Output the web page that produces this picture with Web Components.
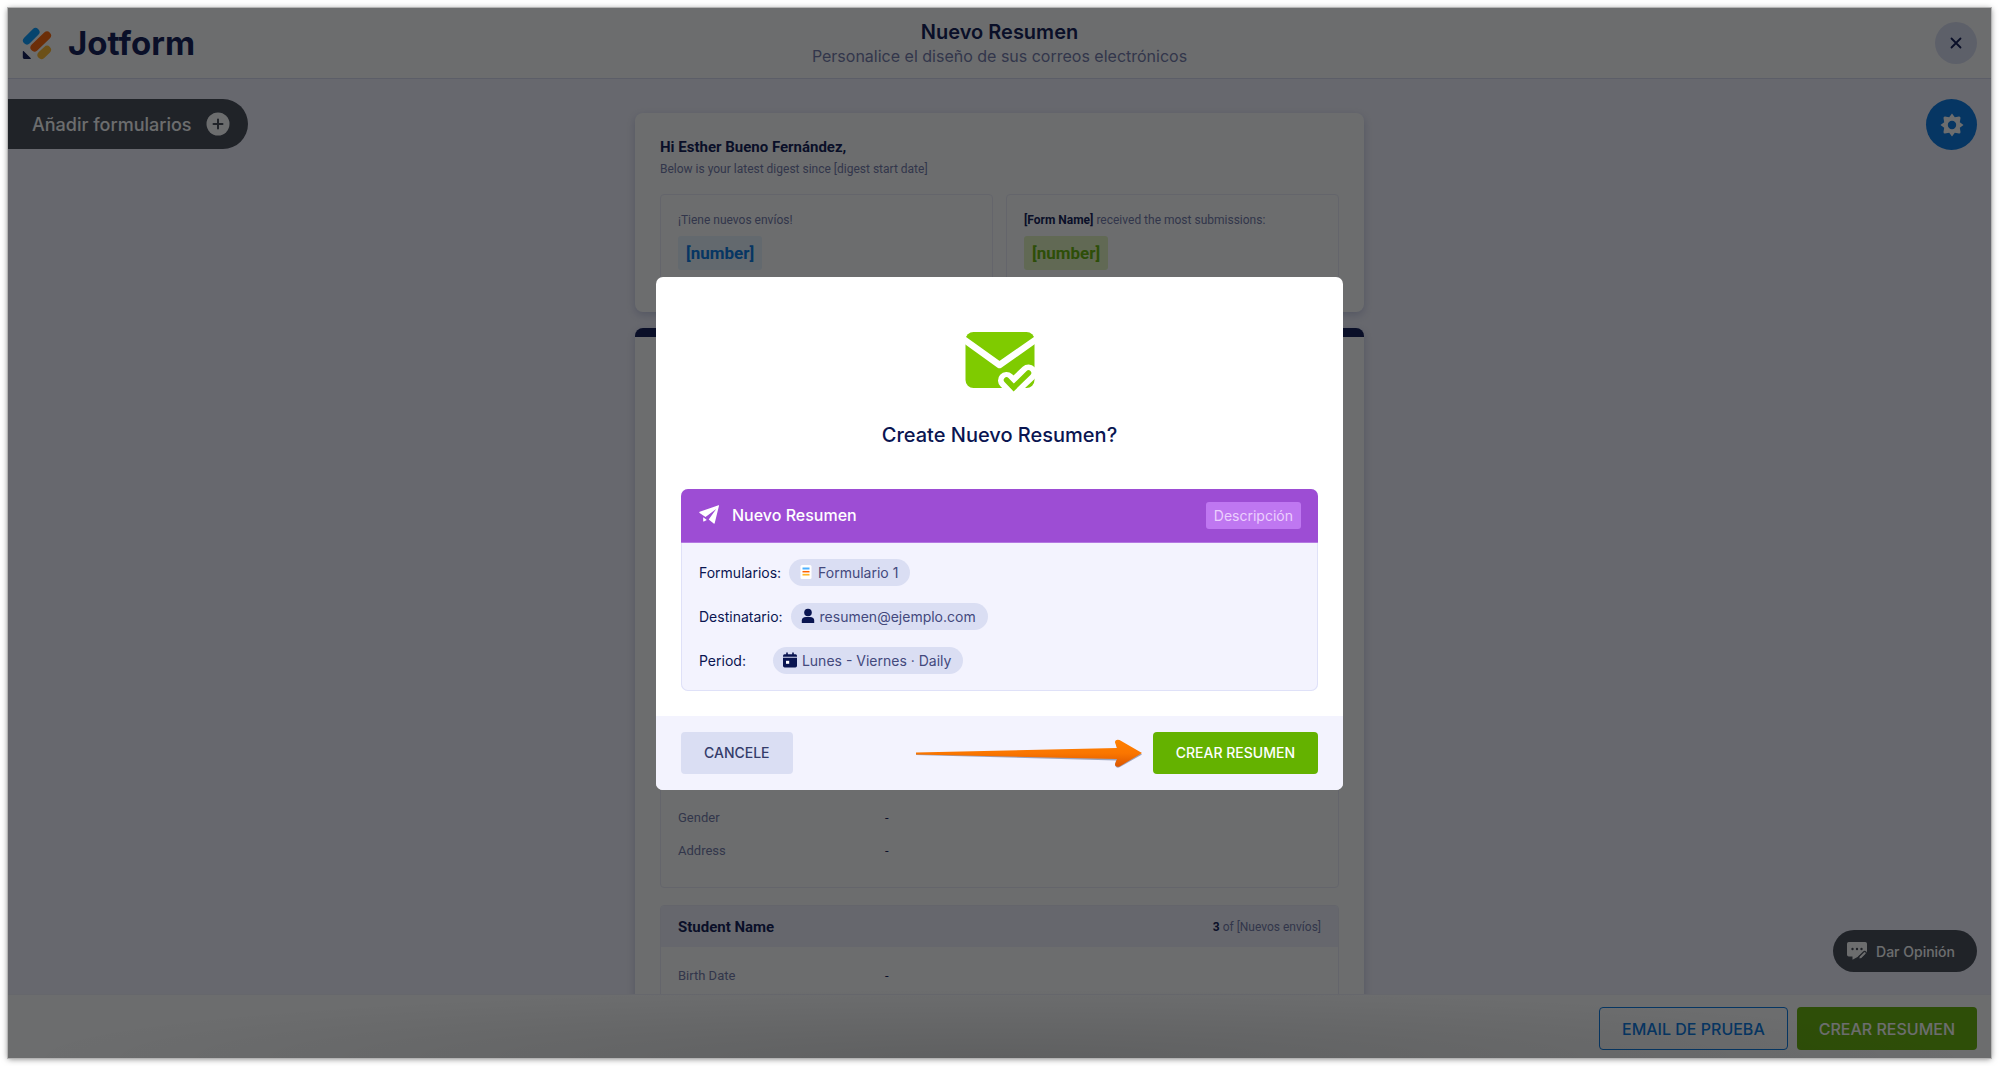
<!DOCTYPE html>
<html lang="es">
<head>
<meta charset="utf-8">
<title>Nuevo Resumen</title>
<style>
  html, body { margin: 0; background: #fff; }
  body { font-family: Inter, "Open Sans", sans-serif; color: #0a1551; }
</style>
</head>
<body>
<digest-app></digest-app>

<script>
const define = (name, markup) => {
  const template = document.createElement('template');
  template.innerHTML = '<style>*{box-sizing:border-box}button{font:inherit;cursor:pointer;border:0;margin:0}svg{display:block;flex:none}</style>' + markup;
  customElements.define(name, class extends HTMLElement {
    constructor() {
      super();
      this.attachShadow({ mode: 'open' }).append(template.content.cloneNode(true));
    }
  });
};

define('app-logo', `
  <style>
    :host { display: block; }
    a { display: flex; align-items: center; gap: 16px; color: #0a1551; text-decoration: none; font-size: 33px; font-weight: 700; line-height: 40px; }
  </style>
  <a href="#" aria-label="Jotform">
    <svg width="30" height="34" viewBox="0 0 30 34" fill="none" stroke-width="8" stroke-linecap="round">
      <path d="M5 14.5 13.5 6" stroke="#0099ff"/>
      <path d="M12.5 21.500 25 9.500" stroke="#ff6100"/>
      <path d="M19.500 29 25 23.800" stroke="#ffb629"/>
      <path d="M.8 25.800c0-.8.6-1 1.200-.4l6.600 6.500c.5.600.3 1.200-.5 1.200H2.600c-1 0-1.800-.8-1.800-1.800z" fill="#0a1551"/>
    </svg>
    <span>Jotform</span>
  </a>`);

define('app-header', `
  <style>
    :host { display: grid; grid-template-columns: 1fr auto 1fr; align-items: center; height: 71px; padding: 0 14px; background: #fff; border-bottom: 1px solid #d6daf0; }
    .title { text-align: center; }
    h1 { margin: 0; font-size: 20px; line-height: 26px; font-weight: 600; }
    p { margin: 0; font-size: 16px; line-height: 22px; color: #6f76a7; }
    button { justify-self: end; width: 42px; height: 42px; border-radius: 50%; background: #dadef3; display: grid; place-items: center; padding: 0; }
  </style>
  <app-logo></app-logo>
  <div class="title"><h1>Nuevo Resumen</h1><p>Personalice el diseño de sus correos electrónicos</p></div>
  <button type="button" aria-label="Cerrar"><svg width="12" height="12" viewBox="0 0 12 12" stroke="#0a1551" stroke-width="1.800" stroke-linecap="round"><path d="M1.500 1.500l9 9M10.500 1.500l-9 9"/></svg></button>`);

define('stat-box', `
  <style>
    :host { display: block; flex: 1; height: 94px; padding: 15px 17px; border: 1px solid #eaebf8; border-radius: 4px; }
    p { margin: 0; font-size: 12px; line-height: 20px; color: #6f76a7; }
    output { display: inline-block; margin-top: 6px; padding: 0 8px; font-size: 17px; line-height: 34px; font-weight: 700; border-radius: 3px; color: #0075e3; background: #e8f4fe; }
    :host([tone="green"]) output { color: #64b200; background: #e3f6bf; }
    ::slotted(b) { color: #0a1551; }
  </style>
  <p><slot></slot></p>
  <output>[number]</output>`);

define('digest-summary', `
  <style>
    :host { display: block; height: 199px; padding: 24px 25px; background: #fff; border-radius: 8px; box-shadow: 0 3px 8px rgba(84,95,160,.3); font-family: Roboto, sans-serif; }
    h2 { margin: 0; font-size: 15px; line-height: 20px; font-weight: 700; }
    p { margin: 2px 0 0; font-size: 12px; line-height: 20px; color: #6f76a7; }
    .stats { display: flex; gap: 13px; margin-top: 15px; }
  </style>
  <h2>Hi Esther Bueno Fernández,</h2>
  <p>Below is your latest digest since [digest start date]</p>
  <div class="stats">
    <stat-box>¡Tiene nuevos envíos!</stat-box>
    <stat-box tone="green"><b>[Form Name]</b> received the most submissions:</stat-box>
  </div>`);

define('field-row', `
  <style>
    :host { display: grid; grid-template-columns: 207px 1fr; font-size: 13px; line-height: 33px; color: #6f76a7; }
    ::slotted([slot="value"]) { color: #0a1551; }
  </style>
  <slot></slot><slot name="value"></slot>`);

define('submission-entry', `
  <style>
    :host { display: flex; flex-direction: column; border: 1px solid #eaebf8; border-radius: 4px; overflow: hidden; }
    header { display: flex; justify-content: space-between; align-items: center; height: 41px; padding: 0 17px; background: #f0f1fd; font-size: 15px; font-weight: 700; }
    .body { flex: 1; display: flex; flex-direction: column; justify-content: flex-end; padding: 12px 17px 20px; }
  </style>
  <header><slot name="name"></slot><slot name="count"></slot></header>
  <div class="body"><slot></slot></div>`);

define('digest-entries', `
  <style>
    :host { display: flex; flex-direction: column; gap: 17px; padding: 24px 25px; background: #fff; border-top: 9px solid #0a1551; border-radius: 8px 8px 0 0; box-shadow: 0 3px 8px rgba(84,95,160,.3); font-family: Roboto, sans-serif; }
    .first { min-height: 527px; }
    .count { font-size: 12px; font-weight: 400; color: #6f76a7; }
    .count b { color: #0a1551; }
  </style>
  <submission-entry class="first">
    <field-row>Gender<span slot="value">-</span></field-row>
    <field-row>Address<span slot="value">-</span></field-row>
  </submission-entry>
  <submission-entry>
    <span slot="name">Student Name</span>
    <span slot="count" class="count"><b>3</b> of [Nuevos envíos]</span>
    <field-row>Birth Date<span slot="value">-</span></field-row>
  </submission-entry>`);

define('digest-canvas', `
  <style>
    :host { flex: 1; min-height: 0; overflow: hidden; display: grid; grid-template-columns: 1fr minmax(0, 729px) 1fr; grid-template-rows: minmax(0, 1fr); background: #f3f3fe; }
    .left { padding-top: 20px; }
    .add { display: flex; align-items: center; gap: 14px; height: 50px; padding: 0 18px 0 24px; border-radius: 0 25px 25px 0; background: #414652; color: #fff; font-size: 18px; font-weight: 500; }
    .mail { display: flex; flex-direction: column; gap: 16px; padding-top: 34px; }
    .mail > * { flex: none; }
    .right { display: flex; flex-direction: column; align-items: flex-end; justify-content: space-between; padding: 20px 14px 22px 0; }
    .gear { width: 51px; height: 51px; border-radius: 50%; background: #0075e3; display: grid; place-items: center; padding: 0; }
    .feedback { display: flex; align-items: center; gap: 9px; height: 42px; padding: 0 22px 0 14px; border-radius: 21px; background: #414652; color: #fff; font-size: 14px; font-weight: 500; }
  </style>
  <div class="left">
    <button class="add" type="button">Añadir formularios
      <svg width="24" height="24" viewBox="0 0 24 24"><circle cx="12" cy="12" r="11.500" fill="#fff"/><path d="M12 7.500v9M7.500 12h9" stroke="#414652" stroke-width="2" stroke-linecap="round"/></svg>
    </button>
  </div>
  <div class="mail"><digest-summary></digest-summary><digest-entries></digest-entries></div>
  <div class="right">
    <button class="gear" type="button" aria-label="Ajustes">
      <svg width="24" height="24" viewBox="0 0 24 24"><path fill="#fff" fill-rule="evenodd" d="M12 .5 14.800 4.200l4.200-.700a1.400 1.400 0 0 1 1.500 1.500l-.700 4.200L23.500 12l-3.700 2.800.700 4.200a1.400 1.400 0 0 1-1.500 1.500l-4.200-.700L12 23.500l-2.800-3.700-4.200.700A1.400 1.400 0 0 1 3.500 19l.700-4.200L.5 12l3.700-2.800L3.500 5A1.400 1.400 0 0 1 5 3.500l4.200.700zM12 7.800a4.200 4.200 0 1 0 0 8.400 4.200 4.200 0 0 0 0-8.400z"/></svg>
    </button>
    <button class="feedback" type="button">
      <svg width="20" height="20" viewBox="0 0 20 20"><path d="M1.800 1h16.400Q20 1 20 2.800v9Q14 12 10.500 16L5.500 18.700V15.500H1.800Q0 15.500 0 13.700V2.800Q0 1 1.800 1z" fill="#fff"/><g fill="#414652"><circle cx="5.500" cy="8" r="1.200"/><circle cx="10" cy="8" r="1.200"/><circle cx="14.500" cy="8" r="1.200"/></g><path d="M11.500 18.300l.7-3 4.300-4.300a1.600 1.600 0 0 1 2.300 2.300L14.500 17.600z" fill="#fff" stroke="#414652" stroke-width="1.200"/></svg>
      Dar Opinión
    </button>
  </div>`);

define('app-footer', `
  <style>
    :host { display: flex; justify-content: flex-end; gap: 9px; padding: 12px 14px 8px; background: #fff; border-top: 1px solid #eff0fa; }
    button { height: 43px; padding: 0 22px; border-radius: 4px; font-size: 16px; font-weight: 500; }
    .test { border: 1px solid #0075e3; background: #fff; color: #0075e3; }
    .create { background: #64b200; color: #fff; }
  </style>
  <button class="test" type="button">EMAIL DE PRUEBA</button>
  <button class="create" type="button">CREAR RESUMEN</button>`);

define('info-chip', `
  <style>
    :host { display: flex; align-items: center; gap: 5px; height: 27px; padding: 0 12px 0 10px; border-radius: 14px; background: #dadef3; color: #43497d; font-size: 14px; }
    ::slotted(svg) { display: block; flex: none; }
  </style>
  <slot name="icon"></slot><slot></slot>`);

define('digest-details', `
  <style>
    :host { display: block; border-radius: 7px; overflow: hidden; background: #f3f3fe; box-shadow: inset 0 0 0 1px #dfe1f8; }
    header { display: flex; align-items: center; gap: 13px; height: 54px; padding: 0 17px 0 18px; background: #9d4dd4; border-bottom: 1px solid #b478e2; color: #fff; }
    h3 { flex: 1; margin: 0; font-size: 16px; font-weight: 500; }
    .tag { height: 27px; padding: 0 8px; border-radius: 3px; background: #bf77f1; color: #eccffe; font-size: 14px; }
    .rows { display: flex; flex-direction: column; gap: 17px; padding: 16px 18px 17px; }
    .row { display: flex; align-items: center; gap: 8px; font-size: 14px; }
    .row.wide { gap: 27px; }
  </style>
  <header>
    <svg width="20" height="20" viewBox="0 0 20 20" fill="#fff"><path d="M19.500.2c.4-.2.600.1.500.500l-4.300 17.600c-.1.500-.6.600-1 .3l-5-4.200L17.200 4 6.500 12 .6 8c-.5-.4-.5-1 .1-1.200z"/><path d="M4.200 12.200l3.600 2.700-2.900 1.500q-.7.200-.7-.5z"/></svg>
    <h3>Nuevo Resumen</h3>
    <button class="tag" type="button">Descripción</button>
  </header>
  <div class="rows">
    <div class="row"><span>Formularios:</span>
      <info-chip><svg slot="icon" width="14" height="16" viewBox="0 0 14 16"><rect x="1.500" y="1" width="11" height="14" rx="1.500" fill="#fff"/><path d="M3.500 4.500h7" stroke="#4db0ff" stroke-width="2"/><path d="M3.500 7.700h7" stroke="#ff6100" stroke-width="1.500"/><path d="M3.500 10.700h7" stroke="#ffb629" stroke-width="1.700"/></svg>Formulario 1</info-chip></div>
    <div class="row"><span>Destinatario:</span>
      <info-chip><svg slot="icon" width="14" height="16" viewBox="0 0 14 16" fill="#0a1551"><circle cx="7" cy="4.500" r="3.800"/><path d="M.8 15v-2.500q0-3.500 4.200-3.500h4q4.200 0 4.200 3.500V15z"/></svg>resumen@ejemplo.com</info-chip></div>
    <div class="row wide"><span>Period:</span>
      <info-chip><svg slot="icon" width="14" height="16" viewBox="0 0 14 16"><path d="M4 .6v3M10 .6v3" stroke="#0a1551" stroke-width="1.600"/><path d="M1.500 2.300h11Q14 2.300 14 3.800v1H0v-1Q0 2.300 1.500 2.300z" fill="#0a1551"/><path d="M0 5.800h14v7.900q0 1.700-1.700 1.700H1.700Q0 15.400 0 13.700z" fill="#0a1551"/><path d="M3 8.800h3.200v3H3z" fill="#fff"/></svg>Lunes - Viernes · Daily</info-chip></div>
  </div>`);

define('confirm-dialog', `
  <style>
    :host { display: block; width: 687px; max-width: 100%; border-radius: 7px; overflow: hidden; background: #fff; }
    .body { display: flex; flex-direction: column; align-items: center; padding: 54px 25px 25px; }
    h2 { margin: 29px 0 41px; font-size: 20px; line-height: 26px; font-weight: 500; }
    digest-details { align-self: stretch; }
    footer { display: flex; align-items: center; justify-content: space-between; height: 74px; padding: 0 25px; background: #f3f3fe; }
    .go { display: flex; align-items: center; gap: 10px; }
    button { height: 42px; padding: 0 23px; border-radius: 4px; font-size: 14px; font-weight: 500; }
    .cancel { background: #dadef3; color: #343c6a; }
    .create { background: #64b200; color: #fff; }
  </style>
  <div class="body">
    <svg width="70" height="62" viewBox="0 0 70 62">
      <rect x=".5" y="1" width="69" height="56" rx="8" fill="#7fcb00"/>
      <path d="M-3 7 34.500 34 73 7" fill="none" stroke="#fff" stroke-width="6.500" stroke-linejoin="round"/>
      <path d="M41.500 49.500 48.700 56 63.500 42" fill="none" stroke="#fff" stroke-width="17" stroke-linecap="round" stroke-linejoin="round"/>
      <path d="M41.500 49 48.700 56.500 63.500 42" fill="none" stroke="#7fcb00" stroke-width="5.500" stroke-linecap="round" stroke-linejoin="miter"/>
    </svg>
    <h2>Create Nuevo Resumen?</h2>
    <digest-details></digest-details>
  </div>
  <footer>
    <button class="cancel" type="button">CANCELE</button>
    <div class="go">
      <svg width="228" height="32" viewBox="0 0 228 32">
        <defs><linearGradient id="g" x1="0" y1="0" x2="0" y2="1"><stop offset="0" stop-color="#ff8000"/><stop offset=".5" stop-color="#fa7600"/><stop offset="1" stop-color="#dc5600"/></linearGradient></defs>
        <path d="M1 17 201 22.500 200 27q1 4 5 2L227 16.500 205 3q-4-1-4 3l1 5L1 16z" fill="#46537a" opacity=".5" transform="translate(0 1)"/>
        <path d="M1 15.500 202 11 200 5.500q0-3.500 4.500-2.500L227 16 204.500 29.500q-4.500 1-4.500-2.500l2-5L1 17.500z" fill="url(#g)"/>
      </svg>
      <button class="create" type="button">CREAR RESUMEN</button>
    </div>
  </footer>`);

define('digest-app', `
  <style>
    :host { position: relative; display: flex; flex-direction: column; height: calc(100vh - 16px); margin: 8px; box-shadow: 0 0 0 1px #b4b4b4, 0 1px 6px rgba(0,0,0,.5); }
    .overlay { position: absolute; inset: 0; display: grid; place-items: center; background: radial-gradient(50% 70px at 50% 100%, rgba(0,0,0,.12), transparent), rgba(10,12,14,.6); }
  </style>
  <app-header></app-header>
  <digest-canvas></digest-canvas>
  <app-footer></app-footer>
  <div class="overlay" role="dialog" aria-modal="true"><confirm-dialog></confirm-dialog></div>`);
</script>
</body>
</html>
